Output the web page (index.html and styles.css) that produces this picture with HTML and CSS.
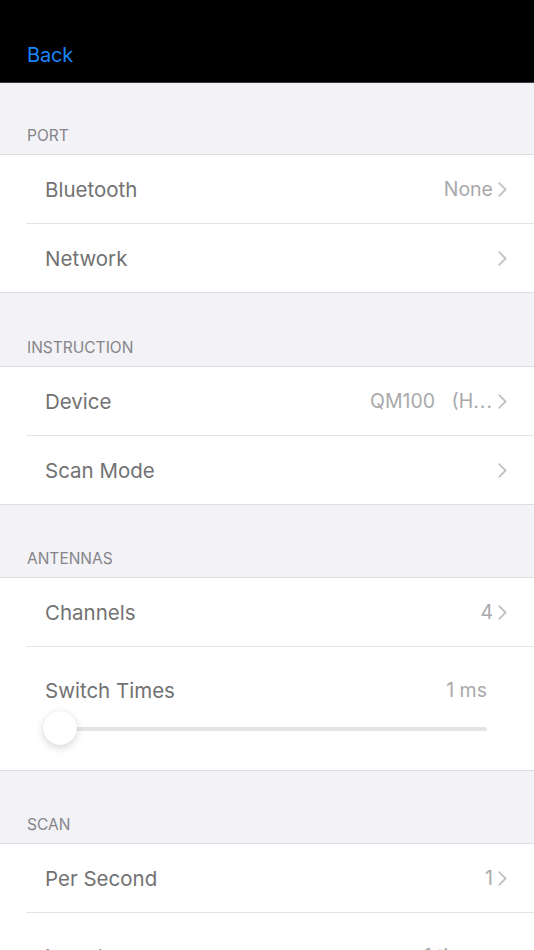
FILE: index.html
```html
<!DOCTYPE html>
<html>
<head>
<meta charset="utf-8">
<link rel="stylesheet" href="styles.css">
</head>
<body>
<header class="navbar"><span class="back">Back</span></header>

<div class="section-header first">PORT</div>
<div class="group">
  <div class="row"><span class="label">Bluetooth</span><span class="value">None</span><svg class="chev" viewBox="0 0 9 15"><path d="M1.2 1.2 L7.6 7.5 L1.2 13.8"/></svg></div>
  <div class="row"><span class="label">Network</span><span class="value"></span><svg class="chev" viewBox="0 0 9 15"><path d="M1.2 1.2 L7.6 7.5 L1.2 13.8"/></svg></div>
</div>

<div class="section-header tall">INSTRUCTION</div>
<div class="group">
  <div class="row"><span class="label">Device</span><span class="value pre">QM100   (H<span class="dots">...</span></span><svg class="chev" viewBox="0 0 9 15"><path d="M1.2 1.2 L7.6 7.5 L1.2 13.8"/></svg></div>
  <div class="row"><span class="label">Scan Mode</span><span class="value"></span><svg class="chev" viewBox="0 0 9 15"><path d="M1.2 1.2 L7.6 7.5 L1.2 13.8"/></svg></div>
</div>

<div class="section-header">ANTENNAS</div>
<div class="group">
  <div class="row"><span class="label">Channels</span><span class="value">4</span><svg class="chev" viewBox="0 0 9 15"><path d="M1.2 1.2 L7.6 7.5 L1.2 13.8"/></svg></div>
  <div class="row slider-row">
    <div class="slider-top"><span class="label">Switch Times</span><span class="value">1 ms</span></div>
    <div class="slider"><div class="track"></div><div class="thumb"></div></div>
  </div>
</div>

<div class="section-header">SCAN</div>
<div class="group">
  <div class="row"><span class="label">Per Second</span><span class="value">1</span><svg class="chev" viewBox="0 0 9 15"><path d="M1.2 1.2 L7.6 7.5 L1.2 13.8"/></svg></div>
  <div class="row slider-row">
    <div class="slider-top"><span class="label">Inventory</span><span class="value">1 times</span></div>
    <div class="slider"><div class="track"></div><div class="thumb"></div></div>
  </div>
</div>
</body>
</html>
```

FILE: styles.css
```css
html, body {
  margin: 0;
  padding: 0;
}
body {
  background: #f2f2f7;
  font-family: Inter, Roboto, "Noto Sans", sans-serif;
  width: 534px;
  overflow: hidden;
}
.navbar {
  height: 83px;
  background: #000;
  border-bottom: 1px solid #3a3a3c;
  box-sizing: border-box;
  display: flex;
  align-items: flex-end;
  padding: 0 0 15px 27px;
}
.back {
  color: #1a84fa;
  font-size: 20px;
  letter-spacing: -0.2px;
}
.section-header {
  height: 72px;
  box-sizing: border-box;
  display: flex;
  align-items: flex-end;
  padding: 0 0 9px 27px;
  font-size: 15.5px;
  color: #858589;
}
.section-header.first {
  height: 71px;
}
.section-header.tall {
  height: 73px;
}
.group {
  background: #fff;
  border-top: 1px solid #dedee2;
  border-bottom: 1px solid #dedee2;
}
.row {
  height: 68px;
  margin-left: 26px;
  padding: 0 27px 0 19px;
  display: flex;
  align-items: center;
  border-bottom: 1px solid #e3e3e6;
}
.row:last-child {
  border-bottom: none;
}
.label {
  font-size: 20.5px;
  color: #727272;
  flex: 1;
}
.value {
  font-size: 19.5px;
  color: #a9a9ab;
  margin-right: 5px;
}
.pre {
  white-space: pre;
}
.dots {
  letter-spacing: 1px;
}
.chev {
  width: 9px;
  height: 15px;
  fill: none;
  stroke: #c2c2c6;
  stroke-width: 1.8;
  stroke-linecap: round;
  stroke-linejoin: round;
}
.row.slider-row {
  height: 123px;
  flex-direction: column;
  align-items: stretch;
  padding: 0 47px 0 19px;
}
.slider-top {
  display: flex;
  align-items: center;
  height: 44px;
  padding-top: 21px;
}
.slider-top .value {
  margin-right: 0;
}
.slider {
  position: relative;
  height: 34px;
  margin-top: -1px;
}
.track {
  position: absolute;
  left: 0;
  right: 0;
  top: 16px;
  height: 4px;
  border-radius: 2px;
  background: #e4e4e6;
}
.thumb {
  position: absolute;
  left: -2px;
  top: 0;
  width: 34px;
  height: 34px;
  border-radius: 50%;
  background: #fff;
  box-shadow: 0 3px 8px rgba(0,0,0,0.15), 0 0 1px rgba(0,0,0,0.12);
}
```
